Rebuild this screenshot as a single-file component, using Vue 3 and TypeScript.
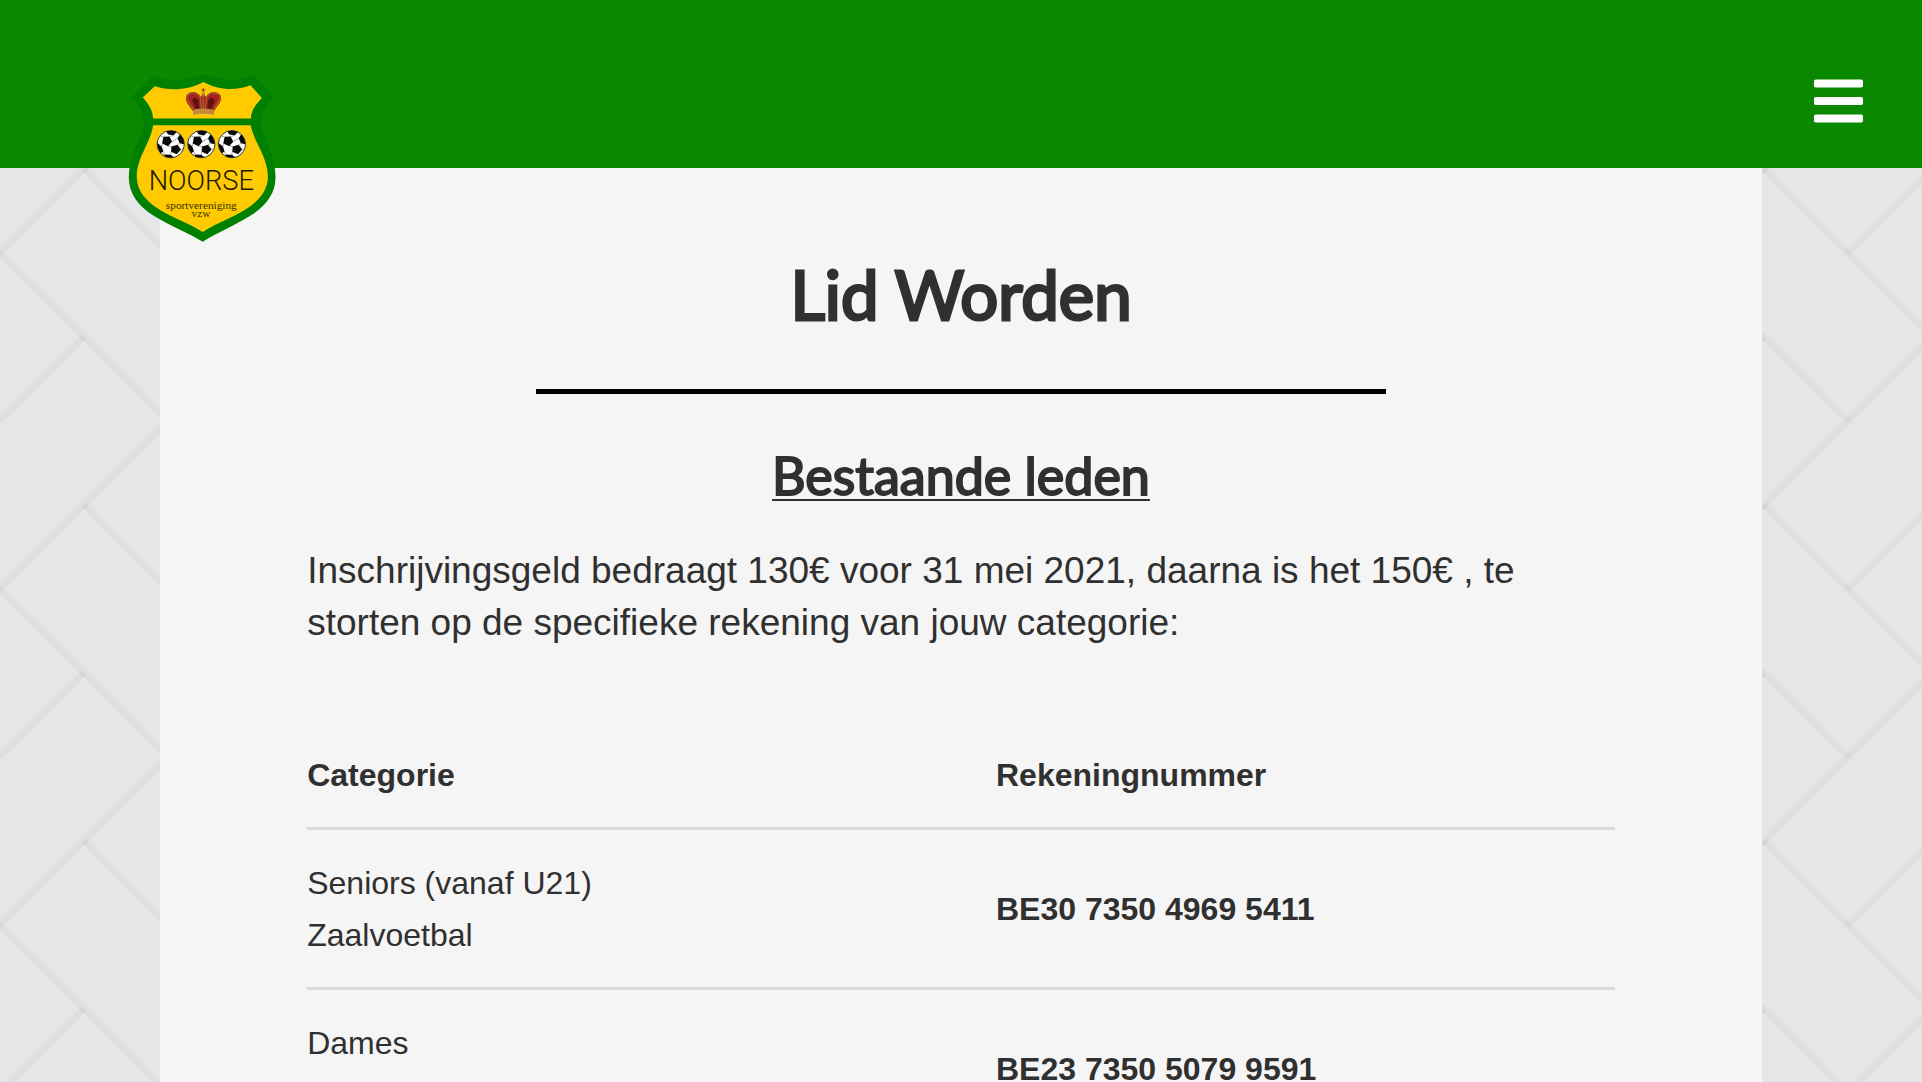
<script setup lang="ts">
interface AccountRow {
  teams: string[]
  account: string
}

const rows: AccountRow[] = [
  { teams: ['Seniors (vanaf U21)', 'Zaalvoetbal'], account: 'BE30 7350 4969 5411' },
  { teams: ['Dames', 'Meisjes'], account: 'BE23 7350 5079 9591' },
]

const ballCentres: number[] = [182, 274, 366]
</script>

<template>
  <div class="page">
    <header class="topbar">
      <a class="logo" href="#" aria-label="Noorse sportvereniging">
        <svg viewBox="54 38 444 508" aria-hidden="true">
          <path
            class="shield-edge"
            d="M128 46C180 68 235 58 280 41C325 58 378 68 432 44L491 110C452 150 448 186 458 214C474 256 497 300 497 352C497 400 468 438 420 468C372 498 325 516 278 545C230 516 180 498 132 468C84 438 56 400 56 352C56 300 80 256 96 214C106 186 103 150 64 112Z"
          />
          <path
            class="shield-fill"
            d="M134 78C182 94 238 88 280 65C322 88 374 94 422 75L456 113C434 136 424 152 423 175H129C128 152 120 138 98 112Z"
          />
          <path
            class="shield-fill"
            d="M129 195H422C434 250 474 290 474 350C474 392 446 424 404 450C362 476 322 488 278 516C234 488 192 476 150 450C108 424 80 392 80 350C80 290 121 250 129 195Z"
          />
          <g class="crown">
            <path class="crown-red" d="M248 152C240 138 222 124 229 106C238 90 264 92 272 110L280 98L288 110C296 92 322 90 332 106C339 124 320 138 313 152Z" />
            <path class="crown-dark" d="M246 120C250 108 262 110 266 124L268 148H258ZM315 120C310 108 298 110 294 124L292 148H303Z" />
            <path class="crown-gold-line" d="M250 148C242 132 226 120 231 106C242 92 264 96 271 114L274 146M311 148C318 132 335 120 330 106C318 92 296 96 289 114L286 146M280 100V146" />
            <path class="crown-gold" d="M248 149Q280 141 313 149L311 164Q280 157 250 164Z" />
            <path class="crown-gold-line" d="M280 83V99M274 89H286" />
            <circle class="crown-gold" cx="280" cy="101" r="5" />
          </g>
          <g v-for="x in ballCentres" :key="x" :transform="`translate(${x} 252)`">
            <circle class="ball" r="41" />
            <path
              class="patch"
              d="M-22 -22L-4 -23L4 -8L-8 6L-26 -2ZM-14 -39Q6 -43 18 -37L9 -27L-8 -29ZM28 -30Q40 -16 40 0L27 -3L20 -18ZM2 7L20 2L31 16L18 30L1 23ZM-41 -4L-27 7L-22 22L-31 27Q-41 12 -41 -4ZM-19 31L0 32L9 39Q-8 42 -19 36Z"
            />
            <path class="seam" d="M-22 -22L-31 -25M-4 -23L9 -27M4 -8L20 -18M-8 6L2 7M-26 -2L-27 7M1 23L0 32M-22 22L-19 31M20 2L27 -3M31 16L37 14" />
          </g>
          <text class="club-name" x="274" y="389" text-anchor="middle">NOORSE</text>
          <text class="club-type" x="274" y="446" text-anchor="middle">sportvereniging</text>
          <text class="club-type" x="273" y="470" text-anchor="middle">vzw</text>
        </svg>
      </a>
      <button class="menu" type="button" aria-label="Menu">
        <svg viewBox="0 0 448 512" aria-hidden="true">
          <path
            d="M16 132h416c8.8 0 16-7.2 16-16V76c0-8.8-7.2-16-16-16H16C7.2 60 0 67.2 0 76v40c0 8.8 7.2 16 16 16zm0 160h416c8.8 0 16-7.2 16-16v-40c0-8.8-7.2-16-16-16H16c-8.8 0-16 7.2-16 16v40c0 8.8 7.2 16 16 16zm0 160h416c8.8 0 16-7.2 16-16v-40c0-8.8-7.2-16-16-16H16c-8.8 0-16 7.2-16 16v40c0 8.8 7.2 16 16 16z"
          />
        </svg>
      </button>
    </header>

    <main class="content">
      <h1>Lid Worden</h1>
      <hr />
      <h2>Bestaande leden</h2>
      <p>
        Inschrijvingsgeld bedraagt 130€ voor 31 mei 2021, daarna is het 150€ , te storten op de
        specifieke rekening van jouw categorie:
      </p>
      <table>
        <thead>
          <tr>
            <th scope="col">Categorie</th>
            <th scope="col">Rekeningnummer</th>
          </tr>
        </thead>
        <tbody>
          <tr v-for="row in rows" :key="row.account">
            <td>
              <div v-for="team in row.teams" :key="team">{{ team }}</div>
            </td>
            <td><strong>{{ row.account }}</strong></td>
          </tr>
        </tbody>
      </table>
    </main>
  </div>
</template>

<style>
body {
  margin: 0;
}
</style>

<style scoped>
.page {
  height: 100vh;
  overflow: hidden;
  display: flex;
  flex-direction: column;
  color: #303030;
  font-family: "Liberation Sans", Arial, sans-serif;
  background-color: #e4e6e8;
  background-image: url("data:image/svg+xml,%3Csvg xmlns='http://www.w3.org/2000/svg' width='336' height='336' viewBox='0 0 336 336'%3E%3Cg fill='none' stroke='%23000' stroke-opacity='.035' stroke-width='6'%3E%3Cpath d='M0 253L168 421M0 -83L168 85'/%3E%3Cpath d='M84 169L252 337M84 -167L252 1'/%3E%3Cpath d='M-4 257L256 -3'/%3E%3Cpath d='M-4 593L256 333'/%3E%3Cpath d='M168 253L252 169'/%3E%3Cpath d='M84 337L0 421M84 1L0 85'/%3E%3C/g%3E%3C/svg%3E");
}

.topbar {
  position: relative;
  z-index: 1;
  flex: none;
  display: flex;
  align-items: center;
  justify-content: flex-end;
  height: 168px;
  padding: 34px 59px 0 128px;
  box-sizing: border-box;
  background: #0a8800;
}

.logo {
  position: absolute;
  top: 73px;
  left: 128px;
}

.logo svg {
  display: block;
  width: 148px;
  height: 169px;
}

.shield-edge {
  fill: #008000;
}

.shield-fill {
  fill: #ffcb00;
}

.crown-red {
  fill: #a8231f;
}

.crown-dark {
  fill: #5e1212;
}

.crown-gold {
  fill: #c08a3a;
}

.crown-gold-line {
  fill: none;
  stroke: #a0602f;
  stroke-width: 4;
}

.ball {
  fill: #fff;
  stroke: #333;
  stroke-width: 3;
}

.patch {
  fill: #0a0a0a;
}

.seam {
  fill: none;
  stroke: #777;
  stroke-width: 2;
}

.club-name {
  fill: #1c1a00;
  font-family: Roboto, sans-serif;
  font-size: 82px;
  font-weight: 300;
}

.club-type {
  fill: #3a3000;
  font-family: "Liberation Serif", serif;
  font-size: 34px;
}

.menu {
  padding: 0;
  border: 0;
  background: none;
  cursor: pointer;
}

.menu svg {
  display: block;
  width: 49px;
  height: 56px;
  fill: #fff;
}

.content {
  flex: 1 0 auto;
  width: 83.33%;
  margin: 0 auto;
  padding: 78px 147px 0;
  box-sizing: border-box;
  background: #f5f5f5;
}

h1,
h2 {
  margin: 0;
  font-family: Lato, sans-serif;
  font-weight: 400;
  text-align: center;
}

h1 {
  font-size: 67px;
  line-height: 96px;
  -webkit-text-stroke: 3px currentColor;
}

hr {
  width: 65%;
  height: 5px;
  margin: 47px auto;
  border: 0;
  background: #000;
}

h2 {
  font-size: 52px;
  line-height: 68px;
  -webkit-text-stroke: 2px currentColor;
  text-decoration: underline 2px;
  text-decoration-skip-ink: none;
  text-underline-offset: 4px;
}

p {
  margin: 36px 0 73px;
  font-size: 37px;
  line-height: 52px;
}

table {
  width: 100%;
  border-collapse: separate;
  border-spacing: 0;
  font-size: 32px;
  line-height: 52px;
}

th,
td {
  width: 50%;
  padding: 27px 0 26px;
  border-bottom: 3px solid #dadada;
  text-align: left;
}

th + th,
td + td {
  padding-left: 35px;
}
</style>
